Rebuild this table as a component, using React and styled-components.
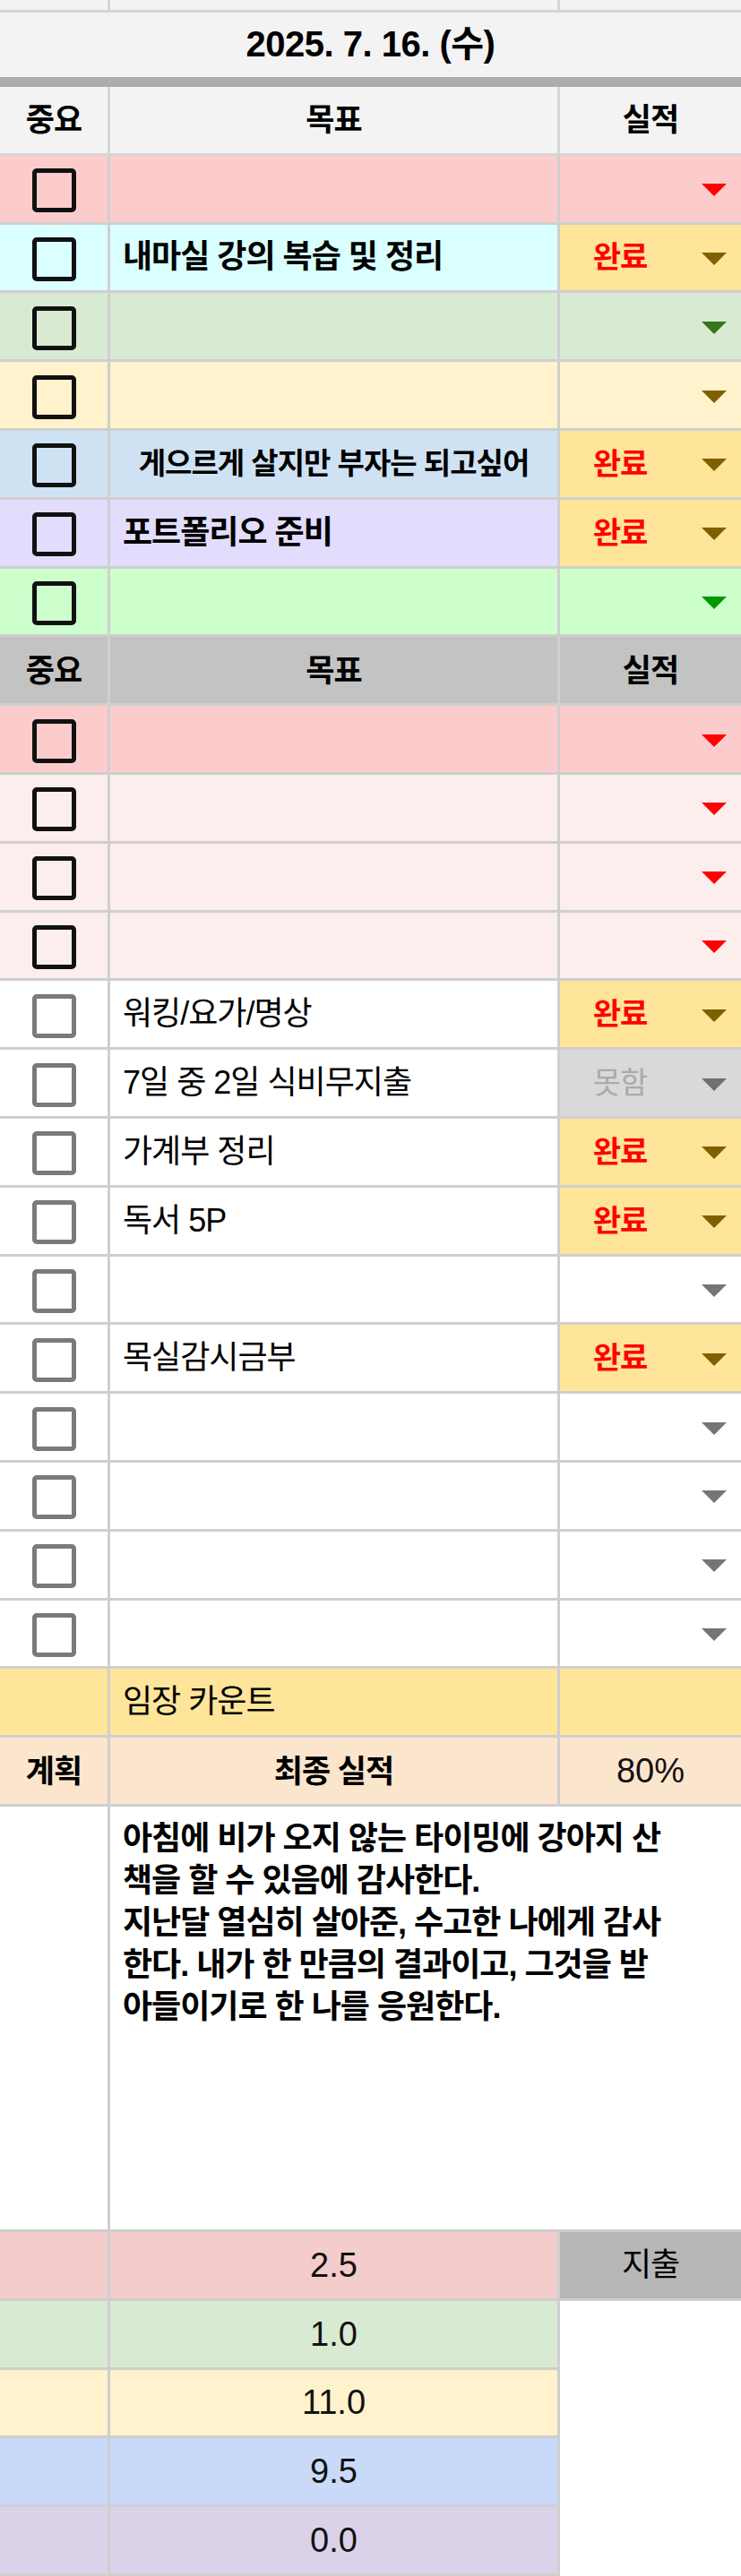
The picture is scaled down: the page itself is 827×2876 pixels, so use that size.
import React from 'react';
import styled, { createGlobalStyle } from 'styled-components';

const GlobalStyle = createGlobalStyle`
  html, body { margin: 0; padding: 0; background: #ffffff; }
  body { font-family: "Liberation Sans", "Noto Sans CJK KR", sans-serif; color: #000; }
  * { box-sizing: border-box; }
`;

const LINE = '#cfcfcf';
const FONT = '"Liberation Sans", "Noto Sans CJK KR", sans-serif';

const Sheet = styled.div`
  width: 827px;
  display: flex;
  flex-direction: column;
`;

const Row = styled.div`
  display: grid;
  grid-template-columns: 123px 502px 202px;
  height: ${p => p.$h || '76.8px'};
  background: ${p => p.$bg || '#ffffff'};
`;

const Cell = styled.div`
  display: flex;
  align-items: center;
  justify-content: ${p => (p.$left ? 'flex-start' : 'center')};
  min-width: 0;
  overflow: visible;
  background: ${p => p.$bg || 'transparent'};
  border-right: ${p => (p.$noRight ? 'none' : `3px solid ${p.$line || LINE}`)};
  border-bottom: ${p => (p.$noBottom ? 'none' : `3px solid ${p.$line || LINE}`)};
  grid-column: ${p => (p.$span ? `span ${p.$span}` : 'auto')};
  padding-left: ${p => (p.$left ? '14px' : '0')};
`;

const DateBar = styled.div`
  height: 72px;
  padding-bottom: 8px;
  background: #f3f3f3;
  display: flex;
  align-items: center;
  justify-content: center;
  font-family: ${FONT};
  font-size: 40px;
  font-weight: 700;
  letter-spacing: -0.5px;
`;

const FreezeBar = styled.div`
  height: 11px;
  background: #acacac;
`;

const HeadText = styled.span`
  font-family: ${FONT};
  font-size: 35px;
  font-weight: 700;
  letter-spacing: -1px;
  line-height: 1;
`;

const Text = styled.span`
  font-family: ${FONT};
  font-size: ${p => p.$size || 36}px;
  font-weight: ${p => (p.$bold ? 700 : 400)};
  letter-spacing: -1px;
  line-height: 1;
  white-space: nowrap;
  color: ${p => p.$color || '#000'};
`;

const NumText = styled.span`
  font-family: "Liberation Sans", Arial, sans-serif;
  font-size: 38px;
  line-height: 1;
  color: #111;
`;

const Checkbox = styled.span`
  display: block;
  width: 49px;
  height: 49px;
  border: 5px solid ${p => p.$color || '#111'};
  border-radius: 5px;
  margin-top: 4px;
`;

const StatusCell = styled(Cell)`
  justify-content: flex-start;
  padding-right: 16px;
  gap: 24px;
`;

const StatusLabel = styled.span`
  flex: 1;
  text-align: center;
  font-family: ${FONT};
  font-size: 34px;
  font-weight: ${p => (p.$bold ? 700 : 400)};
  letter-spacing: -1px;
  line-height: 1;
  color: ${p => p.$color};
`;

const Caret = styled.span`
  flex: none;
  width: 0;
  height: 0;
  border-left: 14.5px solid transparent;
  border-right: 14.5px solid transparent;
  border-top: 14px solid ${p => p.$color};
  margin-top: 3px;
`;

const DiaryCell = styled(Cell)`
  align-items: flex-start;
  justify-content: flex-start;
  padding: 12px 0 0 14px;
`;

const DiaryText = styled.div`
  font-family: ${FONT};
  font-size: 36px;
  font-weight: 700;
  letter-spacing: -1px;
  line-height: 47px;
  white-space: pre;
`;

const STATUS = {
  done: { label: '완료', bg: '#ffe599', color: '#ff0000', bold: true, tri: '#7f6000' },
  fail: { label: '못함', bg: '#d9d9d9', color: '#aaaaaa', bold: false, tri: '#707070' },
};

const topRows = [
  { bg: '#fccccc', tri: '#ff0000' },
  { bg: '#d9ffff', text: '내마실 강의 복습 및 정리', status: 'done' },
  { bg: '#d9ead3', tri: '#38761d' },
  { bg: '#fff2cc', tri: '#7f6000' },
  { bg: '#cfe2f3', text: '게으르게 살지만 부자는 되고싶어', small: true, status: 'done' },
  { bg: '#e2dcfd', text: '포트폴리오 준비', status: 'done' },
  { bg: '#ccffcc', tri: '#009900' },
];

const pinkRows = [
  { bg: '#fccccc', tri: '#ff0000' },
  { bg: '#fdeeee', tri: '#ff0000' },
  { bg: '#fdeeee', tri: '#ff0000' },
  { bg: '#fdeeee', tri: '#ff0000' },
];

const habitRows = [
  { text: '워킹/요가/명상', status: 'done' },
  { text: '7일 중 2일 식비무지출', status: 'fail' },
  { text: '가계부 정리', status: 'done' },
  { text: '독서 5P', status: 'done' },
  {},
  { text: '목실감시금부', status: 'done' },
  {},
  {},
  {},
  {},
];

const totals = [
  { bg: '#f4cccc', v: '2.5', side: '지출' },
  { bg: '#d9ead3', v: '1.0' },
  { bg: '#fff2cc', v: '11.0' },
  { bg: '#c9daf8', v: '9.5' },
  { bg: '#d9d2e9', v: '0.0' },
];

const diary =
  '아침에 비가 오지 않는 타이밍에 강아지 산\n책을 할 수 있음에 감사한다.\n지난달 열심히 살아준, 수고한 나에게 감사\n한다. 내가 한 만큼의 결과이고, 그것을 받\n아들이기로 한 나를 응원한다.';

function HeaderRow({ bg, line }) {
  return (
    <Row $bg={bg} $h="76.8px">
      <Cell $line={line}><HeadText>중요</HeadText></Cell>
      <Cell $line={line}><HeadText>목표</HeadText></Cell>
      <Cell $line={line} $noRight><HeadText>실적</HeadText></Cell>
    </Row>
  );
}

function TaskRow({ bg, text, small, bold, status, tri, box }) {
  const s = status ? STATUS[status] : null;
  return (
    <Row $bg={bg}>
      <Cell><Checkbox $color={box} /></Cell>
      {small ? (
        <Cell><Text $size={33} $bold>{text}</Text></Cell>
      ) : (
        <Cell $left>{text && <Text $bold={bold}>{text}</Text>}</Cell>
      )}
      <StatusCell $noRight $bg={s ? s.bg : undefined}>
        <StatusLabel $bold={s && s.bold} $color={s ? s.color : '#000'}>{s ? s.label : ''}</StatusLabel>
        <Caret $color={s ? s.tri : tri} />
      </StatusCell>
    </Row>
  );
}

export default function App() {
  return (
    <>
      <GlobalStyle />
      <Sheet>
        <Row $bg="#f3f3f3" $h="14px">
          <Cell $line="#d6d6d6" />
          <Cell $line="#d6d6d6" />
          <Cell $line="#d6d6d6" $noRight />
        </Row>
        <DateBar>2025. 7. 16. (수)</DateBar>
        <FreezeBar />
        <HeaderRow bg="#f3f3f3" line="#d6d6d6" />
        {topRows.map((r, i) => (
          <TaskRow key={`t${i}`} {...r} bold box="#111" />
        ))}
        <HeaderRow bg="#c3c3c3" line="#d0d0d0" />
        {pinkRows.map((r, i) => (
          <TaskRow key={`p${i}`} {...r} box="#111" />
        ))}
        {habitRows.map((r, i) => (
          <TaskRow key={`h${i}`} bg="#ffffff" {...r} tri="#757575" box="#7a7a7a" />
        ))}
        <Row $bg="#ffe599">
          <Cell />
          <Cell $left><Text>임장 카운트</Text></Cell>
          <Cell $noRight />
        </Row>
        <Row $bg="#fce5cd">
          <Cell><Text $size={35} $bold>계획</Text></Cell>
          <Cell><Text $size={35} $bold>최종 실적</Text></Cell>
          <Cell $noRight><NumText>80%</NumText></Cell>
        </Row>
        <Row $bg="#ffffff" $h="475px">
          <Cell />
          <DiaryCell $span={2} $noRight>
            <DiaryText>{diary}</DiaryText>
          </DiaryCell>
        </Row>
        {totals.map((t, i) => (
          <Row key={`s${i}`} $bg={t.bg}>
            <Cell />
            <Cell><NumText>{t.v}</NumText></Cell>
            {t.side ? (
              <Cell $noRight $bg="#b7b7b7"><Text>{t.side}</Text></Cell>
            ) : (
              <Cell $noRight $noBottom $bg="#ffffff" />
            )}
          </Row>
        ))}
      </Sheet>
    </>
  );
}
